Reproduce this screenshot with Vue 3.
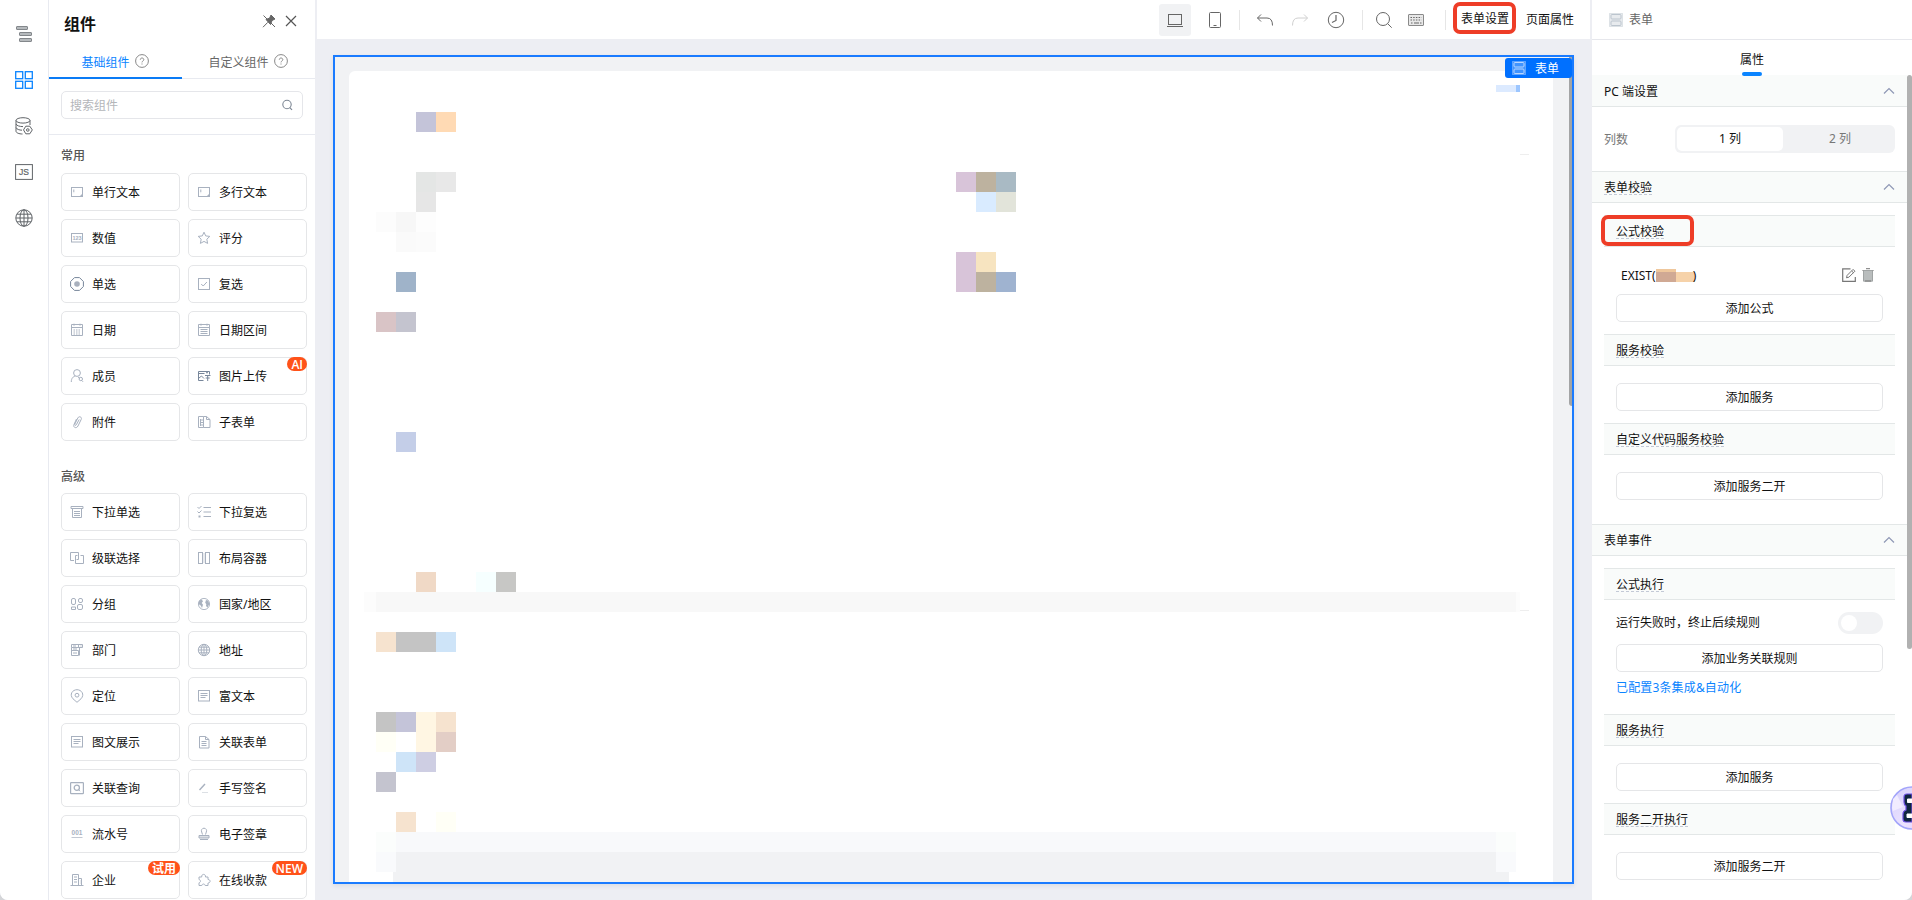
<!-- src/views/FormDesigner.vue -->
<template>
  <div class="designer">
    <!-- Left rail -->
    <nav class="rail">
      <svg
        v-for="item in railIcons"
        :key="item"
        class="rail-icon"
        :class="{ active: item === 'blocks' }"
        viewBox="0 0 18 18"
        v-html="icons[item]"
      ></svg>
    </nav>

    <!-- Component palette -->
    <aside class="palette">
      <header class="palette-header">
        <h2 class="palette-title">组件</h2>
        <svg class="pin" viewBox="0 0 14 14" v-html="icons.pin"></svg>
        <svg class="close" viewBox="0 0 12 12" v-html="icons.close"></svg>
      </header>

      <div class="tabs">
        <div
          v-for="(tab, index) in ['基础组件', '自定义组件']"
          :key="tab"
          class="tab"
          :class="{ active: index === activeTab }"
          @click="activeTab = index"
        >
          <span>{{ tab }}</span>
          <svg class="help" viewBox="0 0 14 14" v-html="icons.help"></svg>
        </div>
      </div>

      <div class="search-wrap">
        <div class="search">
          <span>搜索组件</span>
          <svg class="search-icon" viewBox="0 0 12 12" v-html="icons.search"></svg>
        </div>
      </div>

      <section v-for="group in groups" :key="group.title" class="group">
        <h3 class="group-title">{{ group.title }}</h3>
        <div class="group-grid">
          <div v-for="item in group.items" :key="item.label" class="widget">
            <svg
              class="widget-icon"
              :class="{ dark: item.icon === 'image' || item.icon === 'radio' }"
              viewBox="0 0 14 14"
              v-html="icons[item.icon]"
            ></svg>
            <span>{{ item.label }}</span>
            <em v-if="item.badge" class="badge">{{ item.badge }}</em>
          </div>
        </div>
      </section>
    </aside>

    <!-- Canvas -->
    <main class="main">
      <div class="toolbar">
        <div class="tool selected">
          <svg viewBox="0 0 18 18" v-html="icons.laptop"></svg>
        </div>
        <div class="tool tablet">
          <svg viewBox="0 0 18 18" v-html="icons.tablet"></svg>
        </div>
        <i class="divider"></i>
        <div class="tool undo">
          <svg viewBox="0 0 18 18" v-html="icons.undo"></svg>
        </div>
        <div class="tool redo">
          <svg viewBox="0 0 18 18" v-html="icons.redo"></svg>
        </div>
        <div class="tool history">
          <svg viewBox="0 0 18 18" v-html="icons.clock"></svg>
        </div>
        <i class="divider"></i>
        <div class="tool find">
          <svg viewBox="0 0 18 18" v-html="icons.find"></svg>
        </div>
        <div class="tool keyboard">
          <svg viewBox="0 0 18 18" v-html="icons.keyboard"></svg>
        </div>
        <i class="divider last"></i>
        <a class="link marked">表单设置</a>
        <a class="link">页面属性</a>
      </div>

      <div class="stage">
        <div class="frame">
          <div class="sheet">
            <svg class="blocks" width="1204" height="811" viewBox="349 71 1204 811">
              <rect
                v-for="([x, y, w, h, fill], index) in blocks"
                :key="index"
                :x="x"
                :y="y"
                :width="w"
                :height="h"
                :fill="fill"
              />
            </svg>
          </div>
          <i class="frame-scroll"></i>
          <div class="frame-tag">
            <svg viewBox="0 0 14 14" v-html="icons.form"></svg>
            <span>表单</span>
          </div>
        </div>
      </div>
    </main>

    <!-- Property panel -->
    <aside class="props">
      <header class="props-header">
        <svg viewBox="0 0 14 14" v-html="icons.form"></svg>
        <span>表单</span>
      </header>
      <div class="props-tab"><span>属性</span></div>

      <div class="props-body">
        <div class="section-head first">
          <span>PC 端设置</span>
          <svg viewBox="0 0 12 12" v-html="icons.chevron"></svg>
        </div>
        <div class="columns-row">
          <label>列数</label>
          <div class="segment">
            <span
              v-for="n in 2"
              :key="n"
              :class="{ on: n === columns }"
              @click="columns = n"
            >{{ n }} 列</span>
          </div>
        </div>

        <div class="section-head">
          <span class="hint">表单校验</span>
          <svg viewBox="0 0 12 12" v-html="icons.chevron"></svg>
        </div>
        <div class="section-body">
          <div class="sub-head"><span class="hint">公式校验</span><i class="mark"></i></div>
          <div class="formula">
            <span>EXIST(</span>
            <i class="masked"></i>
            <span>)</span>
            <svg class="edit" viewBox="0 0 14 14" v-html="icons.edit"></svg>
            <svg class="trash" viewBox="0 0 12 14" v-html="icons.trash"></svg>
          </div>
          <button class="add">添加公式</button>
          <div class="sub-head"><span class="hint">服务校验</span></div>
          <button class="add spaced">添加服务</button>
          <div class="sub-head"><span class="hint">自定义代码服务校验</span></div>
          <button class="add spaced">添加服务二开</button>
        </div>

        <div class="section-head events">
          <span>表单事件</span>
          <svg viewBox="0 0 12 12" v-html="icons.chevron"></svg>
        </div>
        <div class="section-body">
          <div class="sub-head"><span class="hint">公式执行</span></div>
          <div class="switch-row">
            <span>运行失败时，终止后续规则</span>
            <i class="switch"></i>
          </div>
          <button class="add">添加业务关联规则</button>
          <a class="configured">已配置3条集成&amp;自动化</a>
          <div class="sub-head"><span class="hint">服务执行</span></div>
          <button class="add spaced">添加服务</button>
          <div class="sub-head"><span class="hint">服务二开执行</span></div>
          <button class="add spaced">添加服务二开</button>
        </div>
      </div>
      <i class="props-scroll"></i>
    </aside>

    <svg class="assistant" width="22" height="44" viewBox="0 0 22 44">
      <defs>
        <linearGradient id="bot" x1="0" y1="0" x2="1" y2="1">
          <stop offset="0" stop-color="#d5d0fb" />
          <stop offset="0.6" stop-color="#ebe2ff" />
          <stop offset="1" stop-color="#e3c8fb" />
        </linearGradient>
      </defs>
      <circle cx="22" cy="22" r="21" fill="url(#bot)" stroke="#a3a5fa" stroke-width="1.6" />
      <path d="M3 13l4-4 6 12-10 4-1-3z" fill="#f1ecff" />
      <path
        d="M22 8h-5q-3 0-3 3v5q0 3 2 4v4q-3 1-3 4v5q0 3 3 3h6z"
        fill="#10263f"
        stroke="#6a4fe0"
        stroke-width="1.2"
      />
      <path d="M22 13h-4.500v3.500H22M22 28h-5v3.500h5" fill="#fff" stroke="#fff" stroke-width="1" />
    </svg>
  </div>
</template>

<script setup>
import { ref } from "vue";

const activeTab = ref(0);
const columns = ref(1);

const railIcons = ["outline", "blocks", "data", "script", "globe"];

const groups = [
  {
    title: "常用",
    items: [
      { label: "单行文本", icon: "text" },
      { label: "多行文本", icon: "text" },
      { label: "数值", icon: "number" },
      { label: "评分", icon: "star" },
      { label: "单选", icon: "radio" },
      { label: "复选", icon: "checkbox" },
      { label: "日期", icon: "date" },
      { label: "日期区间", icon: "range" },
      { label: "成员", icon: "member" },
      { label: "图片上传", icon: "image", badge: "AI" },
      { label: "附件", icon: "clip" },
      { label: "子表单", icon: "subform" },
    ],
  },
  {
    title: "高级",
    items: [
      { label: "下拉单选", icon: "select" },
      { label: "下拉复选", icon: "multi" },
      { label: "级联选择", icon: "cascade" },
      { label: "布局容器", icon: "layout" },
      { label: "分组", icon: "group" },
      { label: "国家/地区", icon: "country" },
      { label: "部门", icon: "dept" },
      { label: "地址", icon: "address" },
      { label: "定位", icon: "locate" },
      { label: "富文本", icon: "rich" },
      { label: "图文展示", icon: "rich" },
      { label: "关联表单", icon: "doc" },
      { label: "关联查询", icon: "query" },
      { label: "手写签名", icon: "sign" },
      { label: "流水号", icon: "serial" },
      { label: "电子签章", icon: "stamp" },
      { label: "企业", icon: "company", badge: "试用" },
      { label: "在线收款", icon: "puzzle", badge: "NEW" },
    ],
  },
];

// x, y, width, height, colour
const blocks = [
  [416, 112, 20, 20, "#c4c4d9"],
  [436, 112, 20, 20, "#ffdab4"],
  [416, 172, 20, 20, "#e4e6e5"],
  [436, 172, 20, 20, "#e8e8e8"],
  [416, 192, 20, 20, "#e6e6e6"],
  [376, 212, 20, 20, "#fcfcfc"],
  [396, 212, 20, 20, "#f7f7f7"],
  [416, 212, 20, 20, "#fdfdfd"],
  [396, 232, 20, 20, "#fafafa"],
  [416, 232, 20, 20, "#fbfbfb"],
  [396, 272, 20, 20, "#9fb3c9"],
  [376, 312, 20, 20, "#d9c4c6"],
  [396, 312, 20, 20, "#c4c4cf"],
  [396, 432, 20, 20, "#c4cee8"],
  [956, 172, 20, 20, "#d8c4d9"],
  [976, 172, 20, 20, "#bdb29f"],
  [996, 172, 20, 20, "#a9bac4"],
  [976, 192, 20, 20, "#d9ebff"],
  [996, 192, 20, 20, "#e2e4da"],
  [956, 252, 20, 40, "#d8c4d9"],
  [976, 252, 20, 20, "#f7e4c0"],
  [976, 272, 20, 20, "#bdb29f"],
  [996, 272, 20, 20, "#9fb3d0"],
  [1496, 85, 20, 7, "#dceaff"],
  [1516, 85, 4, 7, "#9cc6ff"],
  [1520, 154, 9, 1, "#eeeeee"],
  [416, 572, 20, 20, "#f0d9c6"],
  [476, 572, 20, 20, "#f6ffff"],
  [496, 572, 20, 20, "#c7c7c5"],
  [364, 592, 1156, 20, "#fcfcfc"],
  [376, 592, 1140, 20, "#f8f8f8"],
  [1520, 610, 9, 1, "#eeeeee"],
  [376, 632, 20, 20, "#f6e3cf"],
  [396, 632, 40, 20, "#c4c4c4"],
  [436, 632, 20, 20, "#cee4f8"],
  [376, 712, 20, 20, "#c4c4c4"],
  [396, 712, 20, 20, "#c4c4d9"],
  [416, 712, 20, 40, "#fff6e3"],
  [436, 712, 20, 20, "#f6e3cf"],
  [376, 732, 20, 20, "#fffff6"],
  [436, 732, 20, 20, "#e3cec6"],
  [396, 752, 20, 20, "#cee4f8"],
  [416, 752, 20, 20, "#cecee3"],
  [376, 772, 20, 20, "#c4c4cf"],
  [396, 812, 20, 20, "#f6e3cf"],
  [436, 812, 20, 20, "#fffff6"],
  [376, 832, 1140, 20, "#fbfdfc"],
  [396, 832, 1100, 20, "#f8f9fb"],
  [376, 852, 1140, 20, "#f9fafc"],
  [396, 852, 1100, 20, "#f1f2f4"],
  [393, 872, 1116, 10, "#f1f2f4"],
];

const icons = {
  // rail
  outline:
    '<g fill="#b6babd" stroke="#83878b"><rect x="1.500" y="1.500" width="11" height="3" rx=".5"/><rect x="4.500" y="7.500" width="12" height="3" rx=".5"/><rect x="4.500" y="13.500" width="12" height="3" rx=".5"/></g>',
  blocks:
    '<g stroke-width="1.300"><rect x=".7" y=".7" width="7" height="7"/><rect x="10.300" y=".7" width="7" height="7"/><rect x=".7" y="10.300" width="7" height="7"/><rect x="10.300" y="10.300" width="7" height="7"/></g>',
  data:
    '<ellipse cx="8" cy="3.400" rx="7" ry="2.700"/><path d="M1 3.400v10.800c0 1.600 3 2.800 6.500 2.800M15 3.400V8M1 7c.5 1.600 3.500 2.600 7 2.600M1 10.600c.5 1.600 3.500 2.600 6 2.600"/><path d="M10.800 9.200h4l2.500 3.700-2.500 3.900h-4l-2.300-3.900z"/><circle cx="12.800" cy="13" r="1.300"/>',
  script:
    '<rect x=".6" y="1.600" width="16.800" height="14.800"/><text x="9" y="12.300" text-anchor="middle" font-size="8.500" font-family="Liberation Sans" fill="currentColor" stroke-width=".2">JS</text>',
  globe:
    '<circle cx="9" cy="9" r="8.200"/><ellipse cx="9" cy="9" rx="4" ry="8.200"/><path d="M9 .8v16.400M1 9h16M2 5.200h14M2 12.800h14"/>',
  // palette header
  pin: '<path d="M9 1l4 4-3 1.500-1.500 4L4 5.500 7.700 4zM5.800 8.300L1 13.200" fill="#666"/><path d="M1.500 1.500L13 13"/>',
  close: '<path d="M1 1l10 10M11 1L1 11" stroke-width="1.200"/>',
  help: '<circle cx="7" cy="7" r="6.400"/><path d="M5.300 5.700c0-2.300 3.500-2.200 3.500 0 0 1.200-1.800 1.300-1.800 2.700M7 9.500v1"/>',
  search: '<circle cx="6" cy="5.500" r="4.200" stroke-width="1.100"/><path d="M8.800 8.600l2.200 2.200" stroke-width="1.200"/>',
  // toolbar
  laptop: '<rect x="2.500" y="3.500" width="13" height="10"/><path d="M1 15.500h16"/>',
  tablet: '<rect x="3.500" y="1.500" width="11" height="15" rx="1"/><path d="M7.500 14.500h3"/>',
  undo: '<path d="M5 3.500L1.500 7 5 10.500M1.500 7H11q5.500 0 5.500 7.500"/>',
  redo: '<path d="M13 3.500L16.500 7 13 10.500M16.500 7H7Q1.500 7 1.500 14.500"/>',
  clock: '<circle cx="9" cy="9" r="7.700"/><path d="M9 4v5.500L5 11.500" stroke-width="1.200"/>',
  find: '<circle cx="8" cy="8" r="6.500"/><path d="M12.700 12.700l4 4"/>',
  keyboard:
    '<rect x="1.500" y="3.500" width="15" height="11" rx=".5" fill="#e8e8e8" stroke="#8a8a8a"/><path d="M3.500 6.500h11M3.500 9h11" stroke-dasharray="1.500 1.200"/><path d="M4 12h1.500M7 12h5M13 12h1.500"/>',
  // widgets
  text: '<rect x="1.500" y="2.500" width="11" height="9"/><path d="M3.800 4.500v2.800M3.800 8v.1" /><path d="M12.500 8.500v3h-3z" fill="currentColor" stroke="none"/>',
  number:
    '<rect x="1.500" y="2.500" width="11" height="8.500"/><text x="7" y="9" text-anchor="middle" font-size="5.500" font-weight="bold" font-family="Liberation Sans" fill="currentColor" stroke="none">123</text>',
  star: '<path d="M7 1.200l1.700 3.700 4.100.5-3 2.800.8 4.200L7 10.400l-3.600 2 .8-4.200-3-2.800 4.100-.5z"/>',
  radio:
    '<path d="M4.500.6h5l3.900 3.900v5l-3.900 3.900h-5L.6 9.500v-5z"/><circle cx="7" cy="7" r="2.800" fill="#a8b0bd" stroke="none"/>',
  checkbox: '<rect x="1.500" y="1.500" width="11" height="11"/><path d="M4.200 7l2 2 3.700-4"/>',
  date: '<path d="M1.500 1.500h11v11h-11zM1.500 4.500h11M4 .7v2M10 .7v2"/><path d="M3.500 7h7M3.500 9h7M3.500 11h7" stroke-dasharray="1.500 1"/>',
  range: '<path d="M1.500 1.500h11v11h-11zM1.500 4.500h11M4 .7v2M10 .7v2"/><path d="M3.500 6.500h7M3.500 8.500h7M3.500 10.500h7"/>',
  member:
    '<circle cx="7" cy="4" r="3.400"/><path d="M1.300 13c0-4 2-5.500 4-5.800M8 8l2 1.500"/><circle cx="10.800" cy="10" r="1.700"/><path d="M11.800 11.500l1.200 1.300"/>',
  image:
    '<path d="M6.500 11.500h-5v-9h11v3M1.500 4.500h6M2 9l2.500-2 2.500 2.500"/><path d="M8 6.500h5.500M10.700 6.500v5.500M8.700 9h4"/><path d="M9.500 3.500h1V4h-1z"/>',
  clip: '<path d="M9.200 4.500L6.300 9.800c-.6 1.200-2 .5-1.400-.8L7.800 3c1.200-2.400 4.500-1 3.400 1.400L8 11c-1.500 3-5.300 1.500-4-1.500l2.500-5.500" />',
  subform:
    '<path d="M6.500 1.500h3l3.500 3v8H6.500"/><path d="M9.500 1.500v3H13"/><path d="M1.500 1.500h5v11h-5zM3.500 4v7M4 5h2M4 7.500h2M4 10h2"/>',
  select:
    '<path d="M1 1.500h12v2H1z"/><path d="M2.500 3.500v9h9v-9"/><path d="M4 6.500h6M4 8.500h6M4 10.500h6"/>',
  multi: '<path d="M.5 2l1.500 1.500L4.500 1M.5 6.500L2 8l2.500-2.500M6.500 2.500H14M6.500 7H14M6.500 11.500H14"/><path d="M1.500 10.500h2v2h-2z" fill="currentColor" stroke="none"/>',
  cascade:
    '<path d="M4 9.500H.5v-8h8V8.500H6.500M7.500 4.500h-2v8h8v-8h-3"/>',
  layout: '<rect x="1.500" y="1.500" width="4" height="11"/><rect x="8.500" y="1.500" width="4" height="11"/><path d="M7 2v10" opacity=".5"/>',
  group:
    '<rect x="1.500" y="1.500" width="4" height="6" rx="1.500"/><rect x="8.500" y="1.500" width="4" height="4" rx="1.500"/><rect x="7.500" y="7.500" width="5" height="5" rx="1.500"/><path d="M1.500 10h4v2.500h-4z"/>',
  country:
    '<circle cx="7" cy="7" r="5.600" stroke-width=".9"/><path d="M2 4l2.500-1.800 1.500 2L4.700 6l1.300 1.700L5 11 3.700 8.500 1.500 7zM9 3l2.300.8L12.300 7l-1.800 3.500L9 9l.3-1.800L8.200 5.800z" fill="currentColor" stroke="none"/>',
  dept: '<path d="M1.500 1.500h11v3h-11zM8.500 1.500v3M1.500 4.500v8h7v-5h-7M9.500 4.500v8M10.500 3h1M3 3h3M3 6h4M3 10h4"/>',
  address:
    '<circle cx="7" cy="7" r="5.700"/><ellipse cx="7" cy="7" rx="2.800" ry="5.700"/><path d="M7 1v12M1 7h12M2 4.200h10M2 9.800h10"/>',
  locate: '<path d="M7 13.300L3 9.800C-1 5.500 2.500.7 7 .7s8 4.800 4 9.100z"/><circle cx="7" cy="6.200" r="1.900"/>',
  rich: '<rect x="1.500" y="1.500" width="11" height="10.500"/><path d="M3.500 4.500h7M3.500 6.500h7M3.500 8.500h5"/>',
  doc: '<path d="M2.500 1.500h6l3.500 3v8.500H2.500zM8.500 1.500v3H12M4.500 6.500h5M4.500 8.500h5M4.500 10.500h5"/>',
  query:
    '<rect x=".6" y="1.600" width="12.800" height="11" rx=".6" stroke-width="1.200"/><circle cx="6.800" cy="6.700" r="2.600" stroke-width="1.300"/><path d="M8.600 8.600l1.400 1.600"/>',
  sign: '<path d="M2.500 9l5.500-6" stroke-width="1.400"/><path d="M5 11.500h6" opacity=".4"/>',
  serial:
    '<text x="7" y="8" text-anchor="middle" font-size="6.500" font-weight="bold" font-family="Liberation Sans" fill="currentColor" stroke="none">001</text><path d="M1.500 10.500h11" opacity=".7"/>',
  stamp:
    '<path d="M5.500 7.500L4.700 5A2.600 2.600 0 1 1 9.300 5l-.8 2.500"/><path d="M2 8.500h10v2.500H2zM3 12.500h8" fill="currentColor" fill-opacity=".4"/>',
  company:
    '<path d="M2.500 12.500v-11h6v11M8.500 5.500h3v7M.5 12.500h13M4 4h3M4 6.500h3M4 9h3M10 8h.5M10 10h.5"/>',
  puzzle:
    '<path d="M2 4h2.700C4.200.5 9 .5 8.500 4H11v2.500c2.800 0 2.800 3.500 0 3.500v2.500H8.200c-.4-2-3-2-3.400 0H2V9.800c2-.6 2-2.700 0-3.300z"/>',
  // property panel
  form: '<g fill="currentColor" fill-opacity=".35"><rect x=".5" y=".5" width="13" height="13" stroke-opacity=".4"/></g><rect x="2" y="1.500" width="10" height="4.500" rx="1"/><rect x="2" y="8" width="10" height="4.500" rx="1"/>',
  chevron: '<path d="M1 8.500l5-5 5 5" stroke-width="1.200"/>',
  edit: '<path d="M8.500.8H.7v12.500h12.600V9" stroke-width="1.200"/><path d="M4.500 9.800l.6-2.400 6-6 1.800 1.800-6 6zM9.700 3l1.700 1.700"/>',
  trash: '<path d="M.5 2.500h11M4 .7h4"/><path d="M1.500 2.500v10.700h9V2.500z" fill="#b9bdbd" stroke="#a0a4a4"/><path d="M3 13h6"/>',
};
</script>

<style>
html,
body {
  height: 100%;
  overflow: hidden;
  background: #d4d5d8;
}
</style>

<style scoped>
.designer {
  position: relative;
  display: flex;
  height: 900px;
  overflow: hidden;
  border-radius: 0 0 8px 8px;
  background: #edeef3;
  color: #111;
  font-family: "Noto Sans", "Noto Sans CJK SC", sans-serif;
  font-size: 12px;
  line-height: 18px;
}

.designer * {
  box-sizing: border-box;
}

svg {
  display: block;
  flex: none;
  fill: none;
  stroke: currentColor;
}

/* Rail */
.rail {
  display: flex;
  flex-direction: column;
  align-items: center;
  gap: 28px;
  width: 49px;
  padding-top: 25px;
  background: #fff;
  border-right: 1px solid #e8eaf0;
}

.rail-icon {
  width: 18px;
  height: 18px;
  color: #606468;
}

.rail-icon.active {
  color: #0a84ff;
}

/* Palette */
.palette {
  width: 266px;
  background: #fff;
}

.palette-header {
  display: flex;
  align-items: center;
  height: 45px;
  padding: 0 18px 0 15px;
}

.palette-title {
  flex: 1;
  margin: 3px 0 0;
  font-size: 16px;
  line-height: 24px;
  font-weight: 700;
}

.pin {
  width: 14px;
  height: 14px;
  margin: -3px 9px 0 0;
  color: #666;
}

.close {
  width: 12px;
  height: 12px;
  margin-top: -3px;
  color: #555;
}

.tabs {
  display: flex;
  height: 34px;
  border-bottom: 1px solid #e8eaf0;
}

.tab {
  display: flex;
  flex: 1;
  justify-content: center;
  gap: 5px;
  height: 34px;
  padding: 9px 1px 0 0;
  color: #666;
  cursor: pointer;
}

.tab.active {
  color: #0a84ff;
  border-bottom: 2px solid #0a7bf5;
}

.help {
  width: 14px;
  height: 14px;
  color: #888;
}

.search-wrap {
  height: 56px;
  padding: 12px 12px 0;
  border-bottom: 1px solid #e8eaf0;
}

.search {
  display: flex;
  align-items: center;
  justify-content: space-between;
  height: 28px;
  padding: 0 9px 0 8px;
  border: 1px solid #e5e6ea;
  border-radius: 5px;
  color: #b4b6ba;
}

.search span {
  padding-top: 1px;
}

.search-icon {
  width: 12px;
  height: 12px;
  color: #7d8794;
}

.group {
  padding: 12px 8px 0 12px;
}

.group + .group {
  padding-top: 27px;
}

.group-title {
  margin: 0 0 8px;
  font-size: 12px;
  line-height: 18px;
  font-weight: 500;
  color: #555;
}

.group + .group .group-title {
  margin-bottom: 7px;
}

.group-grid {
  display: grid;
  grid-template-columns: 1fr 1fr;
  gap: 8px;
}

.widget {
  position: relative;
  display: flex;
  align-items: center;
  gap: 8px;
  height: 38px;
  padding-left: 8px;
  border: 1px solid #e5e6e8;
  border-radius: 5px;
}

.widget > span {
  padding-top: 2px;
}

.widget-icon {
  width: 14px;
  height: 14px;
  color: #a8b1bf;
}

.widget-icon.dark {
  color: #77869a;
}

.badge {
  position: absolute;
  top: -1px;
  right: -1px;
  height: 14px;
  padding: 0 4px;
  border-radius: 7px;
  background: #ff5219;
  color: #fff;
  font-family: "Open Sans", "Noto Sans CJK SC", sans-serif;
  font-style: normal;
  font-weight: 600;
  line-height: 15px;
}

/* Toolbar */
.main {
  display: flex;
  flex-direction: column;
  width: 1277px;
  padding: 0 2px;
}

.toolbar {
  display: flex;
  align-items: center;
  justify-content: flex-end;
  height: 39px;
  padding-right: 16px;
  background: #fff;
}

.tool {
  display: flex;
  align-items: center;
  justify-content: center;
  width: 32px;
  height: 32px;
  border-radius: 3px;
  color: #666;
}

.tool svg {
  width: 18px;
  height: 18px;
}

.selected {
  background: #f1f2f4;
}

.tablet {
  margin: 0 8px;
}

.undo {
  margin-left: 9px;
}

.redo {
  margin-left: 3px;
  color: #d0d0d0;
}

.history {
  margin: 0 10px 0 4px;
}

.find {
  margin-left: 5px;
}

.keyboard {
  margin-right: 13px;
}

.divider {
  width: 1px;
  height: 20px;
  background: #e6e6e6;
}

.last {
  margin-right: 7px;
}

.link {
  width: 48px;
  white-space: nowrap;
}

.marked {
  width: 63px;
  height: 32px;
  margin: -3px 10px 0 0;
  border: 4px solid #ee3d27;
  border-radius: 7px;
  line-height: 26px;
  text-align: center;
  text-indent: 1px;
}

/* Stage */
.stage {
  flex: 1;
  padding: 16px;
}

.frame {
  position: relative;
  width: 1241px;
  height: 829px;
  padding: 14px 0 0 14px;
  border: 2px solid #1a7bff;
  background: #f1f2f4;
  box-shadow: 0 2px 4px rgba(60, 80, 110, 0.1);
}

.sheet {
  width: 1204px;
  height: 811px;
  overflow: hidden;
  border-radius: 6px 6px 0 0;
  background: #fff;
}

.blocks {
  stroke: none;
  shape-rendering: crispEdges;
}

.frame-scroll {
  position: absolute;
  top: 0;
  right: 0;
  width: 3px;
  height: 349px;
  border-radius: 0 0 0 3px;
  background: #a3a4a5;
}

.frame-tag {
  position: absolute;
  top: 1px;
  right: 0;
  display: flex;
  align-items: center;
  gap: 9px;
  width: 67px;
  height: 20px;
  padding-left: 7px;
  border-radius: 3px;
  background: #0070ff;
  color: #fff;
}

.frame-tag span {
  padding-top: 1px;
}

.frame-tag svg {
  width: 14px;
  height: 14px;
  color: #b8d6ff;
}

/* Properties */
.props {
  position: relative;
  width: 320px;
  background: #fff;
}

.props-header {
  display: flex;
  align-items: center;
  gap: 6px;
  height: 40px;
  padding-left: 17px;
  border-bottom: 1px solid #e6e7ec;
  color: #666;
}

.props-header svg {
  width: 14px;
  height: 14px;
  color: #bcc5ce;
}

.props-tab {
  position: relative;
  z-index: 1;
  height: 35px;
  padding-top: 11px;
  text-align: center;
}

.props-tab::after {
  content: "";
  position: absolute;
  left: 150px;
  bottom: -1px;
  width: 20px;
  height: 4px;
  border-radius: 2px;
  background: #0a84ff;
}

.props-body {
  width: 315px;
}

.section-head {
  display: flex;
  align-items: center;
  justify-content: space-between;
  height: 32px;
  padding: 0 12px;
  border-top: 1px solid #e3e7e7;
  border-bottom: 1px solid #e3e7e7;
  background: #f9fbfa;
}

.section-head.first {
  border-top: 0;
}

.section-head.first span,
.section-head.events span {
  padding-top: 2px;
}

.section-head svg {
  width: 12px;
  height: 12px;
  color: #8f98b5;
}

.hint {
  height: 16px;
  line-height: 18px;
  border-bottom: 1px dashed #c3c9d6;
}

.columns-row {
  display: flex;
  align-items: center;
  justify-content: space-between;
  height: 64px;
  padding: 0 12px;
  color: #777;
}

.columns-row label {
  padding-top: 2px;
}

.segment {
  display: flex;
  width: 220px;
  height: 28px;
  padding: 2px;
  border-radius: 6px;
  background: #f1f2f4;
}

.segment span {
  flex: 0 0 106px;
  line-height: 23px;
  text-align: center;
  border-radius: 5px;
}

.segment span + span {
  margin-left: 4px;
}

.segment .on {
  background: #fff;
  color: #111;
}

.section-body {
  display: flow-root;
  padding: 12px 12px 0;
}

.sub-head {
  position: relative;
  display: flex;
  align-items: center;
  height: 32px;
  padding-left: 12px;
  border-top: 1px solid #e3e7e7;
  border-bottom: 1px solid #e3e7e7;
  background: #f9fbfa;
}

.mark {
  position: absolute;
  top: -1px;
  left: -3px;
  width: 93px;
  height: 31px;
  border: 4px solid #ee3d27;
  border-radius: 7px;
}

.formula {
  display: flex;
  align-items: center;
  height: 47px;
  padding: 10px 20px 0 17px;
}

.masked {
  width: 39px;
  height: 13px;
  margin-right: -2px;
  background: linear-gradient(#efc79c, #efc79c) 0 0 / 20px 3px no-repeat,
    linear-gradient(#d0a994, #d0a994) 0 3px / 20px 10px no-repeat,
    linear-gradient(#f6d2a9, #f6d2a9) 20px 3px / 19px 10px no-repeat;
}

.edit {
  width: 14px;
  height: 14px;
  margin: -2px 6px 0 auto;
  color: #777;
}

.trash {
  width: 12px;
  height: 14px;
  margin: -2px 1px 0 0;
  color: #777;
}

.add {
  display: block;
  width: 267px;
  height: 28px;
  margin: 0 12px 12px;
  padding: 1px 0 0;
  border: 1px solid #e5e6e8;
  border-radius: 5px;
  background: #fff;
  color: #111;
  font: inherit;
  cursor: pointer;
}

.spaced {
  margin-top: 17px;
}

.events {
  margin-top: 12px;
}

.switch-row {
  display: flex;
  align-items: center;
  justify-content: space-between;
  height: 44px;
  padding: 2px 12px 0;
}

.switch {
  width: 45px;
  height: 22px;
  padding: 3px;
  border-radius: 11px;
  background: #f1f2f4;
}

.switch::before {
  content: "";
  display: block;
  width: 16px;
  height: 16px;
  border-radius: 50%;
  background: #fff;
}

.configured {
  display: block;
  height: 36px;
  margin: -6px 12px 0;
  line-height: 20px;
  letter-spacing: 0.15px;
  color: #0a84ff;
}

.props-scroll {
  position: absolute;
  top: 75px;
  right: 0;
  width: 5px;
  height: 574px;
  border-radius: 3px;
  background: #b1b1b1;
}

/* Assistant bubble sits over the panel edge */
.assistant {
  position: absolute;
  top: 786px;
  right: 0;
  stroke: none;
}
</style>
